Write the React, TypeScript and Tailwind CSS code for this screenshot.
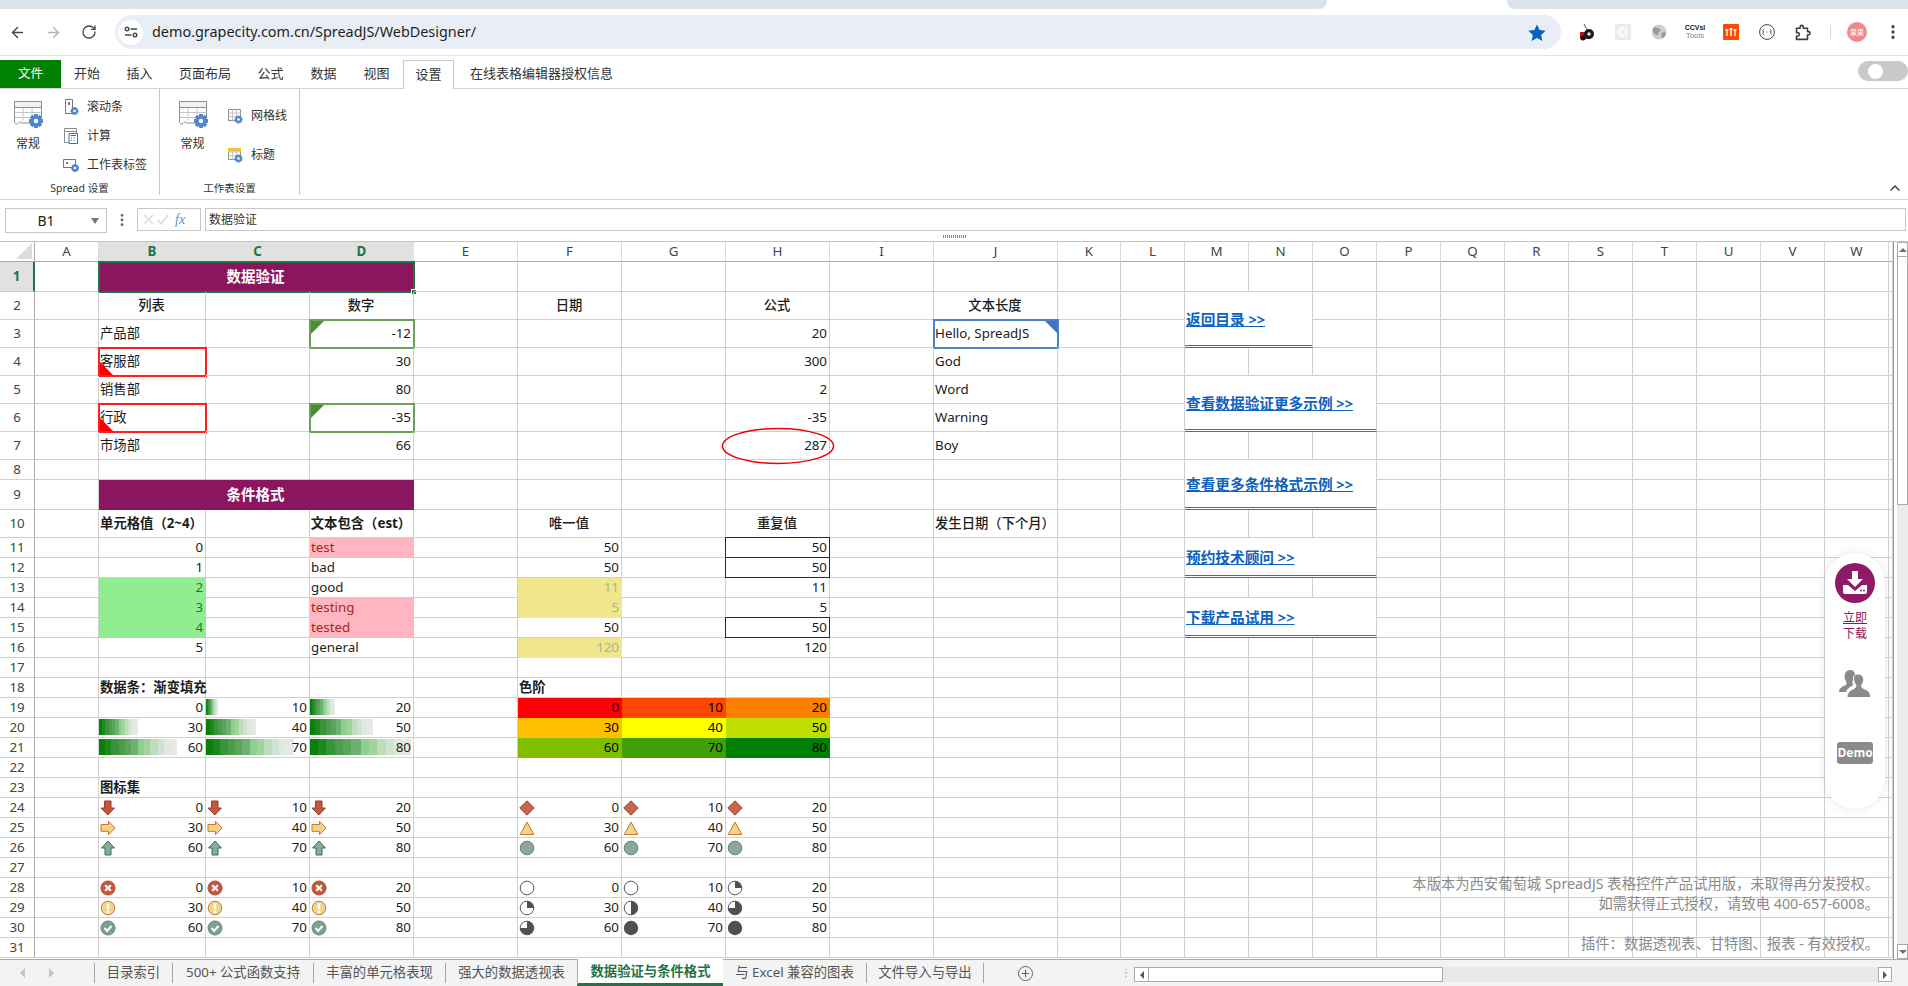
import React from "react";
import { ArrowLeft, ArrowRight, RotateCw, ChevronUp, Plus, EllipsisVertical } from "lucide-react";

const COLS = "ABCDEFGHIJKLMNOPQRSTUVWX".split("");

type Icon = "down" | "right" | "up" | "diamond" | "tri" | "dot" | "x" | "warn" | "ok" | "h0" | "h1" | "h2" | "h3" | "h4";
type Cell = {
  t?: string;
  a?: "l" | "r" | "c";
  b?: boolean;
  m?: boolean;
  cls?: string;
  bar?: number;
  icon?: Icon;
  frame?: "red" | "green" | "blue" | "dark" | "sel";
  link?: boolean;
};

const BOLD_PURPLE = "bg-[#8a1660] border-transparent text-white text-[14.5px]";
const PINK = "bg-[#ffb6c1] border-transparent text-[#a52a1a]";
const LGREEN = "bg-[#90ee90] border-transparent text-[#1e7d1e]";
const KHAKI = "bg-[#f0e68c] border-transparent text-[#aab59a]";
const LINK = "border-b-[3px] border-double border-b-[#3a70c4]";

const cells: Record<string, Cell> = {
  B1: { t: "数据验证", a: "c", b: true, cls: "col-span-3 " + BOLD_PURPLE, frame: "sel" },
  B2: { t: "列表", a: "c", m: true },
  D2: { t: "数字", a: "c", m: true },
  F2: { t: "日期", a: "c", m: true },
  H2: { t: "公式", a: "c", m: true },
  J2: { t: "文本长度", a: "c", m: true },
  B3: { t: "产品部" },
  B4: { t: "客服部", frame: "red" },
  B5: { t: "销售部" },
  B6: { t: "行政", frame: "red" },
  B7: { t: "市场部" },
  D3: { t: "-12", a: "r", frame: "green" },
  D4: { t: "30", a: "r" },
  D5: { t: "80", a: "r" },
  D6: { t: "-35", a: "r", frame: "green" },
  D7: { t: "66", a: "r" },
  H3: { t: "20", a: "r" },
  H4: { t: "300", a: "r" },
  H5: { t: "2", a: "r" },
  H6: { t: "-35", a: "r" },
  H7: { t: "287", a: "r" },
  J3: { t: "Hello, SpreadJS", frame: "blue" },
  J4: { t: "God" },
  J5: { t: "Word" },
  J6: { t: "Warning" },
  J7: { t: "Boy" },
  B9: { t: "条件格式", a: "c", b: true, cls: "col-span-3 " + BOLD_PURPLE },
  B10: { t: "单元格值（2~4）", a: "c", b: true },
  D10: { t: "文本包含（est）", a: "c", b: true },
  F10: { t: "唯一值", a: "c", m: true },
  H10: { t: "重复值", a: "c", m: true },
  J10: { t: "发生日期（下个月）", m: true },
  B11: { t: "0", a: "r" },
  B12: { t: "1", a: "r" },
  B13: { t: "2", a: "r", cls: LGREEN },
  B14: { t: "3", a: "r", cls: LGREEN },
  B15: { t: "4", a: "r", cls: LGREEN },
  B16: { t: "5", a: "r" },
  D11: { t: "test", cls: PINK },
  D12: { t: "bad" },
  D13: { t: "good" },
  D14: { t: "testing", cls: PINK },
  D15: { t: "tested", cls: PINK },
  D16: { t: "general" },
  F11: { t: "50", a: "r" },
  F12: { t: "50", a: "r" },
  F13: { t: "11", a: "r", cls: KHAKI },
  F14: { t: "5", a: "r", cls: KHAKI },
  F15: { t: "50", a: "r" },
  F16: { t: "120", a: "r", cls: KHAKI },
  H11: { t: "50", a: "r", frame: "dark" },
  H12: { t: "50", a: "r", frame: "dark" },
  H13: { t: "11", a: "r" },
  H14: { t: "5", a: "r" },
  H15: { t: "50", a: "r", frame: "dark" },
  H16: { t: "120", a: "r" },
  B18: { t: "数据条：渐变填充", b: true },
  F18: { t: "色阶", b: true },
  B19: { t: "0", a: "r" },
  C19: { t: "10", a: "r", bar: 12 },
  D19: { t: "20", a: "r", bar: 25 },
  B20: { t: "30", a: "r", bar: 39 },
  C20: { t: "40", a: "r", bar: 50 },
  D20: { t: "50", a: "r", bar: 63 },
  B21: { t: "60", a: "r", bar: 78 },
  C21: { t: "70", a: "r", bar: 88 },
  D21: { t: "80", a: "r", bar: 101 },
  F19: { t: "0", a: "r", cls: "bg-[#ff0000] border-transparent text-black" },
  G19: { t: "10", a: "r", cls: "bg-[#ff4500] border-transparent text-black" },
  H19: { t: "20", a: "r", cls: "bg-[#ff8000] border-transparent text-black" },
  F20: { t: "30", a: "r", cls: "bg-[#ffc000] border-transparent text-black" },
  G20: { t: "40", a: "r", cls: "bg-[#ffff00] border-transparent text-black" },
  H20: { t: "50", a: "r", cls: "bg-[#c0df00] border-transparent text-black" },
  F21: { t: "60", a: "r", cls: "bg-[#80bf00] border-transparent text-black" },
  G21: { t: "70", a: "r", cls: "bg-[#40a000] border-transparent text-black" },
  H21: { t: "80", a: "r", cls: "bg-[#008000] border-transparent text-black" },
  B23: { t: "图标集", b: true },
  M2: { t: "返回目录 >>", link: true, cls: "col-span-2 row-span-2 " + LINK },
  M5: { t: "查看数据验证更多示例 >>", link: true, cls: "col-span-3 row-span-2 " + LINK },
  M8: { t: "查看更多条件格式示例 >>", link: true, cls: "col-span-3 row-span-2 " + LINK },
  M11: { t: "预约技术顾问 >>", link: true, cls: "col-span-3 row-span-2 " + LINK },
  M14: { t: "下载产品试用 >>", link: true, cls: "col-span-3 row-span-2 " + LINK },
};

const iconRows: [number, Icon[], Icon[]][] = [
  [24, ["down", "down", "down"], ["diamond", "diamond", "diamond"]],
  [25, ["right", "right", "right"], ["tri", "tri", "tri"]],
  [26, ["up", "up", "up"], ["dot", "dot", "dot"]],
  [28, ["x", "x", "x"], ["h0", "h0", "h1"]],
  [29, ["warn", "warn", "warn"], ["h1", "h2", "h3"]],
  [30, ["ok", "ok", "ok"], ["h3", "h4", "h4"]],
];
const iconValues: Record<number, string[]> = {
  24: ["0", "10", "20"],
  25: ["30", "40", "50"],
  26: ["60", "70", "80"],
  28: ["0", "10", "20"],
  29: ["30", "40", "50"],
  30: ["60", "70", "80"],
};
iconRows.forEach(([r, left, right]) => {
  ["B", "C", "D"].forEach((c, i) => {
    cells[c + r] = { t: iconValues[r][i], a: "r", icon: left[i] };
  });
  ["F", "G", "H"].forEach((c, i) => {
    cells[c + r] = { t: iconValues[r][i], a: "r", icon: right[i] };
  });
});

const covered = new Set(
  "C1 D1 C9 D9 N2 M3 N3 N5 O5 M6 N6 O6 N8 O8 M9 N9 O9 N11 O11 M12 N12 O12 N14 O14 M15 N15 O15".split(" ")
);

function CfIcon({ name }: { name: Icon }) {
  const p = { width: 16, height: 16, viewBox: "0 0 16 16", className: "shrink-0" };
  switch (name) {
    case "down":
      return <svg {...p}><path d="M4.500 1h6.500v7h3.500L7.750 15 1 8h3.500z" fill="#c0583e" stroke="#9e3a26" /></svg>;
    case "right":
      return <svg {...p}><path d="M1 4.500h7.500V1.200L15 8l-6.500 6.800v-3.500H1z" fill="#f0d48a" stroke="#c8782e" /></svg>;
    case "up":
      return <svg {...p}><path d="M5 15h6V8h3.500L8 1 1.500 8H5z" fill="#8ba89c" stroke="#2e7456" /></svg>;
    case "diamond":
      return <svg {...p}><path d="M8 .8 15.200 8 8 15.200.8 8z" fill="#c4684a" stroke="#98392a" /></svg>;
    case "tri":
      return <svg {...p}><path d="M8 2 14.800 14.500H1.200z" fill="#eed58a" stroke="#c8762e" /></svg>;
    case "dot":
      return <svg {...p}><circle cx="8" cy="8" r="6.800" fill="#8fa599" stroke="#4d8a6e" /></svg>;
    case "x":
      return (
        <svg {...p}>
          <circle cx="8" cy="8" r="7" fill="#c4583e" stroke="#b04a32" />
          <path d="M5.200 5.200l5.600 5.600M10.800 5.200l-5.600 5.600" stroke="#fff" strokeWidth="2.200" />
        </svg>
      );
    case "warn":
      return (
        <svg {...p}>
          <circle cx="8" cy="8" r="6.800" fill="#efd690" stroke="#c9763a" />
          <path d="M8 3.500v6" stroke="#fff" strokeWidth="2.200" />
          <circle cx="8" cy="12" r="1.200" fill="#fff" />
        </svg>
      );
    case "ok":
      return (
        <svg {...p}>
          <circle cx="8" cy="8" r="7" fill="#7f9d90" stroke="#5f8c78" />
          <path d="M4.500 8l2.600 3 4.400-5" fill="none" stroke="#fff" strokeWidth="2" />
        </svg>
      );
    case "h0":
      return <svg {...p}><circle cx="8" cy="8" r="6.800" fill="#fff" stroke="#555" /></svg>;
    case "h1":
      return (
        <svg {...p}>
          <circle cx="8" cy="8" r="6.800" fill="#fff" stroke="#555" />
          <path d="M8 8V1.200A6.800 6.800 0 0 1 14.800 8z" fill="#505050" />
        </svg>
      );
    case "h2":
      return (
        <svg {...p}>
          <circle cx="8" cy="8" r="6.800" fill="#fff" stroke="#555" />
          <path d="M8 1.200a6.800 6.800 0 0 1 0 13.600z" fill="#505050" />
        </svg>
      );
    case "h3":
      return (
        <svg {...p}>
          <circle cx="8" cy="8" r="6.800" fill="#fff" stroke="#555" />
          <path d="M8 8V1.200A6.800 6.800 0 1 1 1.200 8z" fill="#505050" />
        </svg>
      );
    default:
      return <svg {...p}><circle cx="8" cy="8" r="7.200" fill="#505050" /></svg>;
  }
}

function Frame({ kind }: { kind: NonNullable<Cell["frame"]> }) {
  if (kind === "red")
    return (
      <span className="absolute -left-px -top-px right-[-2px] bottom-[-2px] border-2 border-[#ff1f1f] pointer-events-none">
        <svg width="13" height="13" className="absolute left-0 bottom-0">
          <path d="M0 0V13H13z" fill="#ff0000" />
        </svg>
      </span>
    );
  if (kind === "green")
    return (
      <span className="absolute -left-px -top-px right-[-2px] bottom-[-2px] border-2 border-[#6c9f57] pointer-events-none">
        <svg width="13" height="13" className="absolute left-0 top-0">
          <path d="M0 0H13L0 13z" fill="#4b8f35" />
        </svg>
      </span>
    );
  if (kind === "blue")
    return (
      <span className="absolute -left-px -top-px right-[-2px] bottom-[-2px] border-2 border-[#4d82c9] pointer-events-none">
        <svg width="12" height="12" className="absolute right-0 top-0">
          <path d="M0 0H12V12z" fill="#3d75c2" />
        </svg>
      </span>
    );
  if (kind === "dark") return <span className="absolute -left-px right-[-1px] -top-px bottom-[-1px] border border-[#8b0000] pointer-events-none" />;
  return (
    <span className="absolute -left-px right-[-2px] -top-px bottom-[-2px] border-2 border-[#217346] pointer-events-none">
      <span className="absolute right-[-4px] bottom-[-4px] w-[6px] h-[6px] bg-[#217346] border border-white" />
    </span>
  );
}

function GridCell({ k, c }: { k: string; c?: Cell }) {
  const cell = c ?? {};
  const align = cell.a === "r" ? "justify-end" : cell.a === "c" ? "justify-center" : "justify-start";
  const between = cell.icon ? "justify-between" : align;
  return (
    <div
      data-cell={k}
      className={
        "relative flex items-center whitespace-nowrap border-r border-b border-[#d0d0d0] pl-[1px] pr-[2px] text-[13.33px] text-[#1c1c1c] " +
        between +
        " " +
        (cell.b ? "font-bold " : cell.m ? "font-medium " : "") +
        (cell.cls ?? "")
      }
    >
      {cell.bar ? (
        <span
          className="absolute left-0 top-[1px] bottom-[2px] bg-[linear-gradient(90deg,#0a800a_0_8%,#1a8a1a_8%_16%,#3a933a_16%_25%,#4c9c4c_25%_33%,#5ba45b_33%_41%,#6eb06e_41%_50%,#8ecf8e_50%_58%,#9fd59a_58%_66%,#c0dcc0_66%_75%,#d0e2d0_75%_83%,#e0e8e0_83%_91%,#e6e9e6_91%_100%)]"
          style={{ width: cell.bar }}
        />
      ) : null}
      {cell.icon ? <CfIcon name={cell.icon} /> : null}
      {cell.link ? (
        <a className="font-bold text-[14.67px] text-[#0f62c0] underline">{cell.t}</a>
      ) : (
        <span className="relative">{cell.t}</span>
      )}
      {cell.frame ? <Frame kind={cell.frame} /> : null}
    </div>
  );
}

function Sheet() {
  const out: React.ReactNode[] = [];
  out.push(
    <div key="corner" className="relative border-r border-b border-r-[#ababab] border-b-[#ababab]">
      <svg width="16" height="16" className="absolute right-[2px] bottom-[2px]">
        <path d="M16 0V16H0z" fill="#dcdcdc" />
      </svg>
    </div>
  );
  COLS.forEach((c) => {
    const on = c === "B" || c === "C" || c === "D";
    out.push(
      <div
        key={"h" + c}
        className={
          "flex items-center justify-center border-r border-b text-[13.33px] " +
          (on
            ? "bg-[#e1e1e1] border-r-[#e1e1e1] border-b-[#217346] text-[#217346] font-bold"
            : "border-r-[#d6dcd9] border-b-[#ababab] text-[#444]")
        }
      >
        {c === "X" ? "" : c}
      </div>
    );
  });
  for (let r = 1; r <= 31; r++) {
    out.push(
      <div
        key={"r" + r}
        className={
          "flex items-center justify-center border-b text-[13.33px] " +
          (r === 1
            ? "bg-[#e1e1e1] border-r-2 border-r-[#217346] border-b-[#d0d0d0] text-[#217346] font-bold"
            : "border-r border-r-[#ababab] border-b-[#d0d0d0] text-[#444]")
        }
      >
        {r}
      </div>
    );
    COLS.forEach((c) => {
      const k = c + r;
      if (covered.has(k)) return;
      out.push(<GridCell key={k} k={k} c={cells[k]} />);
    });
  }
  return (
    <div className="grid grid-cols-[35px_64px_107px_104px_104px_104px_104px_104px_104px_104px_124px_63px_64px_64px_64px_64px_64px_64px_64px_64px_64px_64px_64px_64px_4px] grid-rows-[20px_30px_28px_28px_28px_28px_28px_28px_20px_30px_28px_20px_20px_20px_20px_20px_20px_20px_20px_20px_20px_20px_20px_20px_20px_20px_20px_20px_20px_20px_20px_20px]">
      {out}
    </div>
  );
}

function Gear({ x, y, r }: { x: number; y: number; r: number }) {
  const teeth = [0, 45, 90, 135];
  return (
    <g>
      {teeth.map((a) => (
        <rect
          key={a}
          x={x - r * 0.28}
          y={y - r}
          width={r * 0.56}
          height={r * 2}
          fill="#4f86cf"
          transform={`rotate(${a} ${x} ${y})`}
        />
      ))}
      <circle cx={x} cy={y} r={r * 0.74} fill="#4f86cf" />
      <circle cx={x} cy={y} r={r * 0.32} fill="#fff" />
    </g>
  );
}

function BigIcon() {
  return (
    <svg width="32" height="30" viewBox="0 0 32 30">
      <path d="M2.500 1.500h27v17M2.500 1.500v20c0 3 3 3 4 1.500s2-1.500 3 0h10" fill="none" stroke="#8c8c8c" />
      <path d="M2.500 7.500h27M2.500 12.500h27M2.500 17.500h22M11 7.500v13M20 1.500v18" fill="none" stroke="#c4c4c4" />
      <path d="M2.500 1.500h27v6h-27z" fill="#f2f2f2" stroke="#8c8c8c" />
      <Gear x={24} y={21} r={7} />
    </svg>
  );
}

function SmallIcon({ kind }: { kind: "scroll" | "calc" | "tab" | "grid" | "head" }) {
  if (kind === "scroll")
    return (
      <svg width="16" height="18" viewBox="0 0 16 18">
        <path d="M2.500 1.500h7v14h-7z" fill="#fff" stroke="#777" />
        <path d="M5 4h2v3H5z" fill="#777" />
        <Gear x={11.500} y={13} r={4} />
      </svg>
    );
  if (kind === "calc")
    return (
      <svg width="16" height="18" viewBox="0 0 16 18">
        <path d="M1.500 1.500h12v14h-12zM1.500 4.500h12" fill="#fff" stroke="#8c8c8c" />
        <path d="M6 6.500h8.500v10H6z" fill="#fff" stroke="#2f6fbf" />
        <path d="M7.500 8.500h5.500M8 11h1M10.500 11h1M8 13.500h1M10.500 13.500h1" stroke="#2f6fbf" />
      </svg>
    );
  if (kind === "tab")
    return (
      <svg width="18" height="16" viewBox="0 0 18 16">
        <path d="M1.500 2.500h12v8h-12z" fill="#fff" stroke="#777" />
        <path d="M4 5h2v2H4z" fill="#777" />
        <Gear x={13} y={11} r={4} />
      </svg>
    );
  return (
    <svg width="16" height="16" viewBox="0 0 16 16">
      <path d="M1.500 1.500h12v11h-12z" fill="#fff" stroke="#8c8c8c" />
      {kind === "head" ? <path d="M1 1h13v3.500H1z" fill="#f5c518" /> : null}
      <path d="M1.500 5h12M1.500 8.500h12M5.500 1.500v11M9.500 1.500v11" stroke="#c4c4c4" />
      <Gear x={11.500} y={11.500} r={4} />
    </svg>
  );
}

function ExtIcons() {
  return (
    <div className="flex items-center">
      <div className="w-[36px] flex justify-center">
        <svg width="17" height="18" viewBox="0 0 17 18">
          <path d="M5 1l3 6" stroke="#555" />
          <path d="M1 9h11v7H1z" fill="#b3121e" />
          <circle cx="10" cy="11" r="5" fill="#1a1a1a" />
          <circle cx="10" cy="11" r="1.800" fill="#ddd" />
          <circle cx="4" cy="15" r="2.500" fill="#111" />
        </svg>
      </div>
      <div className="w-[36px] flex justify-center">
        <div className="w-[16px] h-[16px] bg-[#e7ebe9] flex items-center justify-center">
          <svg width="14" height="14" viewBox="0 0 14 14" fill="none" stroke="#fff">
            <ellipse cx="7" cy="7" rx="6" ry="2.400" />
            <ellipse cx="7" cy="7" rx="6" ry="2.400" transform="rotate(60 7 7)" />
            <ellipse cx="7" cy="7" rx="6" ry="2.400" transform="rotate(120 7 7)" />
          </svg>
        </div>
      </div>
      <div className="w-[36px] flex justify-center">
        <svg width="16" height="16" viewBox="0 0 16 16">
          <circle cx="8" cy="8" r="7.500" fill="#cfcfcf" />
          <path d="M3 3c3 1 4 0 6 2s-2 3-2 5-3 1-4-1-2-4 0-6zM10 9c2-1 4-1 5 0 0 2-2 5-4 5-1-2 0-3-1-5z" fill="#9a9a9a" />
        </svg>
      </div>
      <div className="w-[36px] flex flex-col items-center leading-[8px] font-['Liberation_Sans',sans-serif]">
        <span className="text-[7px] font-bold text-[#222]">CCVsl</span>
        <span className="text-[8px] text-[#888]">Tools</span>
      </div>
      <div className="w-[36px] flex justify-center">
        <svg width="16" height="16" viewBox="0 0 16 16">
          <rect width="16" height="16" rx="1" fill="#ff4a00" />
          <path d="M4 5v7M8 4v8M12 5v7M2.500 6h3M6.500 5h3M10.500 6h3" stroke="#fff" strokeWidth="1.400" />
        </svg>
      </div>
      <div className="w-[36px] flex justify-center">
        <svg width="16" height="16" viewBox="0 0 16 16" fill="none" stroke="#444">
          <circle cx="8" cy="8" r="7.400" />
          <path d="M5 5.500c-1 0-.7 1.200-.7 2s-.5.600-.7.600c.2 0 .7 0 .7.700s-.3 1.900.7 1.900M11 5.500c1 0 .7 1.200.7 2s.5.600.7.600c-.2 0-.7 0-.7.700s.3 1.900.7 1.900M7 8h.4M8.600 8H9" strokeWidth="0.900" />
        </svg>
      </div>
      <div className="w-[36px] flex justify-center">
        <svg width="17" height="17" viewBox="0 0 17 17" fill="none" stroke="#3c4043" strokeWidth="1.600">
          <path d="M1.500 4.200h3.600V3a1.600 1.600 0 0 1 3.200 0v1.200h4.200v3.400h1a1.600 1.600 0 0 1 0 3.200h-1v4.600H1.500v-3.400h1.200a1.700 1.700 0 0 0 0-3.400H1.500z" strokeLinejoin="round" />
        </svg>
      </div>
    </div>
  );
}

function Toolbar() {
  return (
    <div className="flex items-center h-[47px] border-b border-[#e3e3e3] bg-white font-['Noto_Sans',sans-serif]">
      <div className="w-[35px] flex justify-center"><ArrowLeft size={17} color="#474747" strokeWidth={2} /></div>
      <div className="w-[36px] flex justify-center"><ArrowRight size={17} color="#b5b5b5" strokeWidth={2} /></div>
      <div className="w-[36px] flex justify-center"><RotateCw size={16} color="#474747" strokeWidth={2} /></div>
      <div className="ml-[8px] w-[1446px] h-[34px] rounded-full bg-[#e9eef6] flex items-center pl-[3px] pr-[15px]">
        <div className="w-[25px] h-[25px] rounded-full bg-white flex items-center justify-center">
          <svg width="14" height="12" viewBox="0 0 14 12" fill="none" stroke="#474747" strokeWidth="1.400">
            <circle cx="3" cy="3" r="1.800" />
            <path d="M6.500 3H13M1 9h6.500" />
            <circle cx="11" cy="9" r="1.800" />
          </svg>
        </div>
        <span className="ml-[9px] text-[14.4px] text-[#1f1f1f] leading-none">demo.grapecity.com.cn/SpreadJS/WebDesigner/</span>
        <svg className="ml-auto" width="18" height="17" viewBox="0 0 18 17">
          <path d="M9 .5l2.600 5.500 6 .8-4.400 4.200 1.100 6L9 14.100 3.700 17l1.100-6L.4 6.800l6-.8z" fill="#0b62bd" />
        </svg>
      </div>
      <div className="ml-[8px]"><ExtIcons /></div>
      <div className="ml-[9px] w-[1px] h-[14px] bg-[#c6dcee]" />
      <div className="ml-[16px] w-[20px] h-[20px] rounded-full bg-[#f08a8a] flex items-center justify-center text-[7px] text-white font-['Noto_Sans_CJK_SC',sans-serif]">果果</div>
      <div className="ml-[16px] w-[20px] flex justify-center"><EllipsisVertical size={18} color="#474747" strokeWidth={2.400} /></div>
    </div>
  );
}

const ribbonTabs: [string, string][] = [
  ["开始", "w-[52px]"],
  ["插入", "w-[53px]"],
  ["页面布局", "w-[78px]"],
  ["公式", "w-[53px]"],
  ["数据", "w-[53px]"],
  ["视图", "w-[53px]"],
];

function RibbonTabs() {
  return (
    <div className="flex items-end h-[33px] border-b border-[#d4d4d4] text-[13px] text-[#333]">
      <div className="w-[61px] h-[28px] bg-[#008000] text-white flex items-center justify-center text-[12.5px]">文件</div>
      {ribbonTabs.map(([t, w]) => (
        <div key={t} className={"h-[28px] flex items-center justify-center " + w}>{t}</div>
      ))}
      <div className="w-[51px] h-[29px] -mb-px bg-white border border-b-0 border-[#c8c8c8] flex items-center justify-center">设置</div>
      <div className="h-[28px] pl-[16px] flex items-center">在线表格编辑器授权信息</div>
      <div className="ml-auto mb-[7px] w-[50px] h-[20px] rounded-full bg-[#c9c9c9] flex items-center pl-[10px]">
        <span className="w-[15px] h-[15px] rounded-full bg-white" />
      </div>
    </div>
  );
}

function SmallBtn({ kind, label }: { kind: "scroll" | "calc" | "tab" | "grid" | "head"; label: string }) {
  return (
    <div className="flex items-center h-[29px]">
      <div className="w-[18px] flex justify-center"><SmallIcon kind={kind} /></div>
      <span className="ml-[7px]">{label}</span>
    </div>
  );
}

function Ribbon() {
  return (
    <div className="relative flex h-[111px] pb-[4px] border-b border-[#d4d4d4] text-[12px] text-[#333]">
      <div className="w-[160px] flex flex-col border-r border-[#c8c8c8]">
        <div className="flex flex-1">
          <div className="w-[56px] pt-[11px] flex flex-col items-center">
            <BigIcon />
            <span className="mt-[4px] leading-[20px]">常规</span>
          </div>
          <div className="pt-[3px] ml-[6px]">
            <SmallBtn kind="scroll" label="滚动条" />
            <SmallBtn kind="calc" label="计算" />
            <SmallBtn kind="tab" label="工作表标签" />
          </div>
        </div>
        <div className="h-[14px] leading-[14px] text-center text-[10.5px]">Spread 设置</div>
      </div>
      <div className="w-[140px] flex flex-col border-r border-[#c8c8c8]">
        <div className="flex flex-1">
          <div className="w-[65px] pt-[11px] flex flex-col items-center">
            <BigIcon />
            <span className="mt-[4px] leading-[20px]">常规</span>
          </div>
          <div className="pt-[12px] ml-[1px] flex flex-col gap-[10px]">
            <SmallBtn kind="grid" label="网格线" />
            <SmallBtn kind="head" label="标题" />
          </div>
        </div>
        <div className="h-[14px] leading-[14px] text-center text-[10.5px]">工作表设置</div>
      </div>
      <ChevronUp className="absolute right-[5px] top-[91px]" size={16} color="#333" />
    </div>
  );
}

function FormulaBar() {
  return (
    <div className="relative flex items-start h-[42px] pt-[8px] border-b border-[#c4c4c4] bg-white">
      <div className="ml-[5px] w-[102px] h-[25px] border border-[#c8c8c8] flex items-center text-[14px] text-[#222]">
        <span className="w-[80px] text-center">B1</span>
        <span className="ml-[5px] w-0 h-0 border-x-[4px] border-x-transparent border-t-[6px] border-t-[#777]" />
      </div>
      <div className="w-[30px] h-[23px] flex justify-center items-center">
        <EllipsisVertical size={16} color="#666" strokeWidth={2.200} />
      </div>
      <div className="w-[64px] h-[23px] border border-[#c8c8c8] flex items-center pl-[5px] gap-[3px] text-[#d0d0d0]">
        <svg width="11" height="11" viewBox="0 0 11 11" stroke="#d8d8d8" strokeWidth="1.300"><path d="M1 1l9 9M10 1l-9 9" /></svg>
        <svg width="12" height="11" viewBox="0 0 12 11" fill="none" stroke="#d8d8d8" strokeWidth="1.300"><path d="M1 6l3 4 7-9" /></svg>
        <span className="ml-[3px] text-[14px] italic text-[#5e8fcf] font-['Liberation_Serif',serif]">fx</span>
      </div>
      <div className="ml-[4px] w-[1701px] h-[23px] border border-[#c8c8c8] pl-[3px] flex items-center text-[12px] text-[#333]">数据验证</div>
      <div className="absolute left-[943px] bottom-[3px] w-[24px] h-[3px] bg-[repeating-linear-gradient(90deg,#888_0,#888_1px,transparent_1px,transparent_2px)]" />
    </div>
  );
}

function FloatPanel() {
  return (
    <div className="absolute left-[1825px] top-[311px] w-[60px] h-[256px] rounded-full bg-white shadow-[0_0_8px_rgba(120,130,170,0.22)] flex flex-col items-center pt-[10px]">
      <div className="w-[40px] h-[40px] rounded-full bg-[#8f1a66] flex items-center justify-center">
        <svg width="26" height="26" viewBox="0 0 26 26">
          <path d="M10 1h6v8h5l-8 8-8-8h5z" fill="#fff" />
          <path d="M1 15h5l7 6 7-6h5v7a2 2 0 0 1-2 2H3a2 2 0 0 1-2-2z" fill="#fff" />
          <circle cx="19" cy="20.500" r="0.900" fill="#8f1a66" />
          <circle cx="22" cy="20.500" r="0.900" fill="#8f1a66" />
        </svg>
      </div>
      <div className="mt-[7px] text-[12px] leading-[16px] text-[#8a1a62] text-center">
        <div className="underline">立即</div>
        <div>下载</div>
      </div>
      <svg className="mt-[27px]" width="32" height="30" viewBox="0 0 32 30">
        <path d="M11 1c3 0 5 2 5 5 0 1-.3 2-.7 3-2 2-2.300 5-1 7-3 2-7 4-7 7H0c0-4 4-6 7-7 1-2 .5-3-.5-4.500C4.500 7 6 1 11 1z" fill="#8a8a8a" />
        <path d="M19 5c4 0 6 3 5.500 6.500-.2 2-1 3.500-2 5 0 2 1 2.500 3 3.500 3 1.200 6 2.500 6 8.500H8c0-5 3-7 6-8.500 2-1 3-1.500 3-3.500-1-1.500-2-3-2.300-5C14 8 15 5 19 5z" fill="#8a8a8a" stroke="#fff" />
      </svg>
      <div className="mt-[43px] w-[36px] h-[22px] rounded-[3px] bg-[#8a8a8a] text-white text-[12px] font-bold flex items-center justify-center font-['Open_Sans',sans-serif]">Demo</div>
    </div>
  );
}

const sheetTabs: [string, string][] = [
  ["目录索引", "w-[78px]"],
  ["500+ 公式函数支持", "w-[141px]"],
  ["丰富的单元格表现", "w-[132px]"],
  ["强大的数据透视表", "w-[132px]"],
];

function TabBar() {
  return (
    <div className="flex h-[27px] border-t border-[#ababab] bg-[#f3f3f3] text-[13.33px] text-[#555]">
      <div className="w-[94px] flex items-center">
        <svg className="ml-[20px]" width="6" height="10" viewBox="0 0 6 10"><path d="M5 0v10L0 5z" fill="#c4c4c4" /></svg>
        <svg className="ml-[22px]" width="6" height="10" viewBox="0 0 6 10"><path d="M1 0v10l5-5z" fill="#c4c4c4" /></svg>
      </div>
      {sheetTabs.map(([t, w]) => (
        <div key={t} className={"my-[3px] flex items-center justify-center border-l border-[#a8a8a8] " + w}>{t}</div>
      ))}
      <div className="w-[146px] -mt-px pt-px bg-white border-b-[3px] border-[#217346] text-[#217346] font-bold flex items-center justify-center border-l border-l-[#ababab]">数据验证与条件格式</div>
      <div className="my-[3px] w-[143px] flex items-center justify-center">与 Excel 兼容的图表</div>
      <div className="my-[3px] w-[118px] flex items-center justify-center border-l border-r border-[#a8a8a8]">文件导入与导出</div>
      <div className="w-[82px] flex justify-center items-center">
        <div className="w-[15px] h-[15px] rounded-full border border-[#666] flex items-center justify-center">
          <Plus size={11} color="#666" strokeWidth={2.500} />
        </div>
      </div>
      <div className="ml-[54px] w-[14px] flex items-center justify-start">
        <EllipsisVertical size={12} color="#bbb" />
      </div>
      <div className="mt-[7px] h-[15px] w-[758px] flex bg-[#e9e9e9]">
        <div className="w-[15px] h-[15px] bg-white border border-[#ababab] flex items-center justify-center">
          <svg width="4" height="8" viewBox="0 0 4 8"><path d="M4 0v8L0 4z" fill="#555" /></svg>
        </div>
        <div className="w-[294px] h-[15px] bg-white border border-l-0 border-[#ababab]" />
        <div className="ml-auto w-[14px] h-[15px] bg-white border border-[#ababab] flex items-center justify-center">
          <svg width="4" height="8" viewBox="0 0 4 8"><path d="M0 0v8l4-4z" fill="#555" /></svg>
        </div>
      </div>
    </div>
  );
}

function VScroll() {
  return (
    <div className="flex-1 pl-[3px] bg-white">
      <div className="h-full bg-[#ebebeb] flex flex-col">
        <div className="h-[15px] bg-white border border-[#ababab] flex items-center justify-center">
          <svg width="8" height="4" viewBox="0 0 8 4"><path d="M0 4h8L4 0z" fill="#7a6a72" /></svg>
        </div>
        <div className="h-[248px] bg-white border-x border-b border-[#ababab]" />
        <div className="mt-auto h-[15px] bg-white border border-[#ababab] flex items-center justify-center">
          <svg width="8" height="4" viewBox="0 0 8 4"><path d="M0 0h8L4 4z" fill="#7a6a72" /></svg>
        </div>
      </div>
    </div>
  );
}

export default function App() {
  return (
    <div className="w-[1908px] h-[986px] overflow-hidden flex flex-col bg-white font-['Noto_Sans','Noto_Sans_CJK_SC',sans-serif]">
      <div className="flex h-[9px] shrink-0 bg-white">
        <div className="w-[1327px] bg-[#dde3ea] rounded-br-[8px]" />
        <div className="ml-auto w-[401px] bg-[#dde3ea] rounded-bl-[8px]" />
      </div>
      <Toolbar />
      <RibbonTabs />
      <Ribbon />
      <FormulaBar />
      <div className="relative flex h-[717px] shrink-0 overflow-hidden">
        <div className="w-[1894px] border-r border-[#9a9a9a] overflow-hidden">
          <Sheet />
        </div>
        <VScroll />
        <svg className="absolute left-[720px] top-[184px]" width="116" height="40" viewBox="0 0 116 40">
          <ellipse cx="58" cy="20" rx="55.500" ry="17.500" fill="none" stroke="#ee0000" strokeWidth="1.500" />
        </svg>
        <FloatPanel />
        <div className="absolute right-[29px] top-[632px] text-right text-[14.3px] leading-[20px] text-[#8a8a8a] whitespace-nowrap pointer-events-none">
          <div>本版本为西安葡萄城 SpreadJS 表格控件产品试用版，未取得再分发授权。</div>
          <div>如需获得正式授权，请致电 400-657-6008。</div>
          <div className="h-[20px]" />
          <div>插件：数据透视表、甘特图、报表 - 有效授权。</div>
        </div>
      </div>
      <TabBar />
    </div>
  );
}
